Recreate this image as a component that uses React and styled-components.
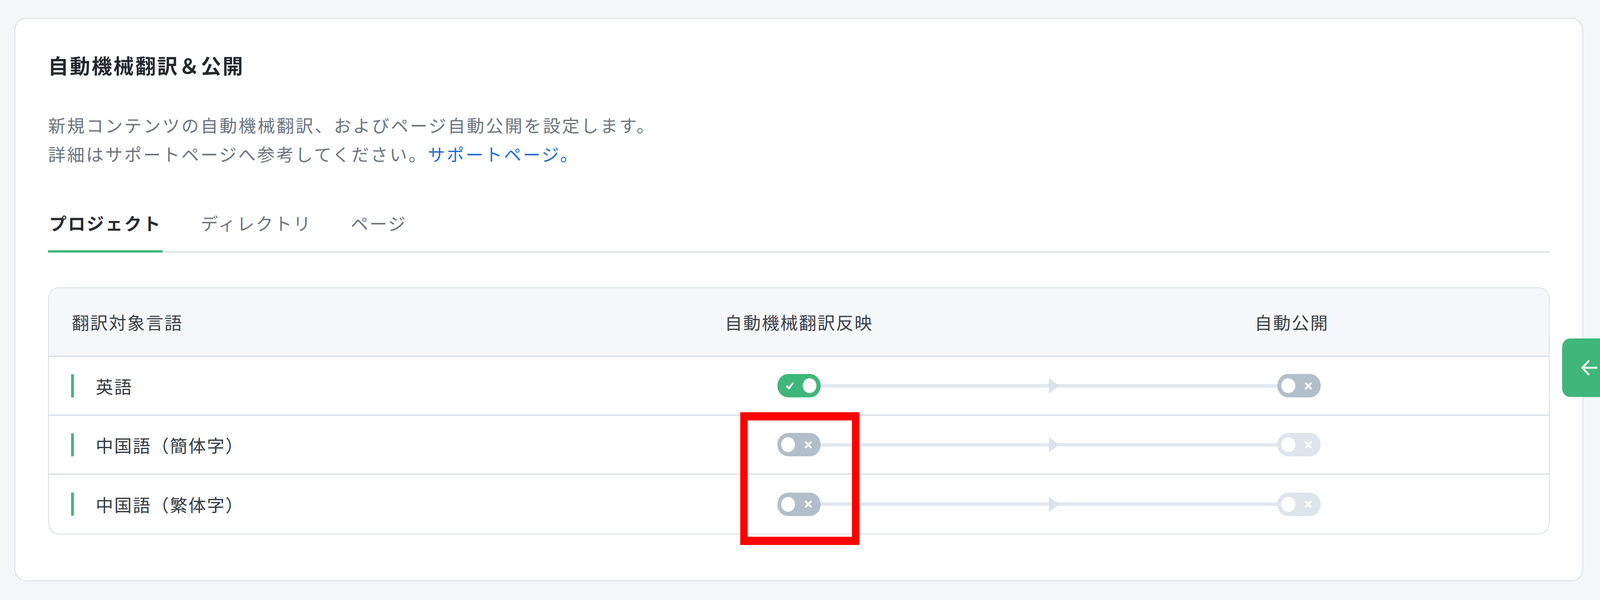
import React from "react";
import styled, { createGlobalStyle, css } from "styled-components";

// the design is measured on a 4400 x 1537 screen; scale it to the real viewport
const x = (n) => `calc(${n} * 100vw / 4400)`;
const y = (n) => `calc(${n} * 100vh / 1537)`;
const round = (n) => `${x(n)} / ${y(n)}`;

const GlobalStyle = createGlobalStyle`
  * { box-sizing: border-box; }
  html, body {
    margin: 0;
    overflow: hidden;
  }
  body {
    background: #f5f6f8;
    font-family: "Noto Sans CJK JP", "Noto Sans", sans-serif;
    color: #2b3138;
  }
`;

const languages = [
  { name: "英語", translate: true, publish: "off" },
  { name: "中国語（簡体字）", translate: false, publish: "disabled" },
  { name: "中国語（繁体字）", translate: false, publish: "disabled" },
];

export default function App() {
  return (
    <Page>
      <GlobalStyle />
      <Card>
        <Title>自動機械翻訳＆公開</Title>
        <Desc>
          新規コンテンツの自動機械翻訳、およびページ自動公開を設定します。
          <br />
          詳細はサポートページへ参考してください。
          <SupportLink href="#">サポートページ。</SupportLink>
        </Desc>

        <TabBar>
          <Tab $active>プロジェクト</Tab>
          <Tab>ディレクトリ</Tab>
          <Tab>ページ</Tab>
        </TabBar>

        <Table>
          <HeadRow>
            <HeadCell>翻訳対象言語</HeadCell>
            <HeadCell $center>自動機械翻訳反映</HeadCell>
            <HeadCell $center>自動公開</HeadCell>
          </HeadRow>
          {languages.map((lang) => (
            <Row key={lang.name}>
              <LangCell>
                <LangMark />
                {lang.name}
              </LangCell>
              <Flow>
                <Spacer />
                <Toggle state={lang.translate ? "on" : "off"} />
                <Connector />
                <Toggle state={lang.publish} />
                <Spacer />
              </Flow>
            </Row>
          ))}
        </Table>
      </Card>

      <SideTab>
        <ArrowIcon viewBox="0 0 44 40" fill="none" preserveAspectRatio="none">
          <path
            d="M20 3 L3 20 L20 37 M3 20 H42"
            stroke="#fff"
            strokeWidth="5"
            strokeLinecap="round"
            strokeLinejoin="round"
          />
        </ArrowIcon>
      </SideTab>

      <Highlight />
    </Page>
  );
}

function Toggle({ state }) {
  const on = state === "on";
  return (
    <Switch $state={state}>
      {on ? (
        <>
          <SwitchIcon viewBox="0 0 22 20" preserveAspectRatio="none">
            <path
              d="M3 11 L8 16 L19 4"
              stroke="#fff"
              strokeWidth="4.5"
              fill="none"
              strokeLinecap="round"
              strokeLinejoin="round"
            />
          </SwitchIcon>
          <Knob />
        </>
      ) : (
        <>
          <Knob />
          <SwitchIcon viewBox="0 0 22 22" preserveAspectRatio="none">
            <path
              d="M4 4 L18 18 M18 4 L4 18"
              stroke="#fff"
              strokeWidth="5"
              strokeLinecap="round"
            />
          </SwitchIcon>
        </>
      )}
    </Switch>
  );
}

const Page = styled.div`
  position: relative;
  height: 100vh;
  padding: ${y(46)} ${x(46)} 0 ${x(40)};
`;

const Card = styled.section`
  background: #fff;
  border: ${x(3)} solid #d6dde7;
  border-radius: ${round(32)};
  padding: ${y(79)} ${x(90)} ${y(118)} ${x(90)};
`;

const Title = styled.h2`
  margin: 0;
  font-size: ${x(56)};
  line-height: ${y(80)};
  font-weight: 700;
  letter-spacing: ${x(4)};
  color: #23282e;
`;

const Desc = styled.p`
  margin: ${y(76)} 0 0;
  font-size: ${x(48)};
  line-height: ${y(74)};
  letter-spacing: ${x(4.4)};
  color: #6c757f;
`;

const SupportLink = styled.a`
  color: #1f6fd6;
  text-decoration: none;
`;

const TabBar = styled.div`
  display: flex;
  gap: ${x(102)};
  margin-top: ${y(104)};
  border-bottom: ${y(3)} solid #d6dde7;
`;

const Tab = styled.div`
  font-size: ${x(48)};
  line-height: ${y(72)};
  letter-spacing: ${x(3.6)};
  padding: 0 ${x(2)} ${y(34)} ${x(3)};
  margin-bottom: ${y(-3)};
  border-bottom: ${y(6)} solid transparent;
  color: #6c757f;
  ${(p) =>
    p.$active &&
    css`
      font-weight: 700;
      color: #262b31;
      border-bottom-color: #3fb77a;
    `}
`;

const Table = styled.div`
  margin-top: ${y(89)};
  border: ${x(3)} solid #d6dde7;
  border-radius: ${round(30)};
  overflow: hidden;
`;

const grid = css`
  display: grid;
  grid-template-columns: repeat(3, 1fr);
  align-items: center;
  border-bottom: ${y(3)} solid #d6dde7;
  &:last-child {
    border-bottom: none;
  }
`;

const HeadRow = styled.div`
  ${grid};
  height: ${y(176)};
  background: #f6f7f9;
`;

const HeadCell = styled.div`
  font-size: ${x(48)};
  letter-spacing: ${x(3)};
  color: #3a4048;
  padding-left: ${(p) => (p.$center ? "0" : x(63))};
  text-align: ${(p) => (p.$center ? "center" : "left")};
  &:last-child {
    padding-right: ${x(40)};
  }
`;

const Row = styled.div`
  ${grid};
  height: ${y(151)};
`;

const LangCell = styled.div`
  display: flex;
  align-items: center;
  gap: ${x(60)};
  padding-left: ${x(61)};
  font-size: ${x(48)};
  letter-spacing: ${x(3)};
  color: #333a42;
`;

const LangMark = styled.span`
  width: ${x(8)};
  height: ${y(59)};
  background: #3fb77a;
`;

const Flow = styled.div`
  grid-column: 2 / 4;
  display: flex;
  align-items: center;
`;

const Spacer = styled.div`
  flex: 1 1 0;
`;

const Connector = styled.div`
  flex: 2 1 0;
  height: ${y(9)};
  background: #e3e8ef;
  position: relative;
  &::after {
    content: "";
    position: absolute;
    left: 50%;
    top: 50%;
    transform: translateY(-50%);
    border-top: ${y(20)} solid transparent;
    border-bottom: ${y(20)} solid transparent;
    border-left: ${x(29)} solid #dbe2ea;
  }
`;

const switchBg = {
  on: "#40b77a",
  off: "#b2bec9",
  disabled: "#dde4ec",
};

const Switch = styled.div`
  flex: none;
  width: ${x(119)};
  height: ${y(60)};
  border-radius: ${round(30)};
  background: ${(p) => switchBg[p.$state]};
  display: flex;
  align-items: center;
  justify-content: space-between;
  padding-left: ${(p) => (p.$state === "on" ? x(24) : x(11))};
  padding-right: ${(p) => (p.$state === "on" ? x(11) : x(23))};
`;

const SwitchIcon = styled.svg`
  width: ${x(22)};
  height: ${y(21)};
`;

const Knob = styled.span`
  width: ${x(38)};
  height: ${y(38)};
  border-radius: 50%;
  background: #fff;
`;

const SideTab = styled.div`
  position: absolute;
  top: ${y(867)};
  right: 0;
  width: ${x(104)};
  height: ${y(150)};
  background: #3fb77a;
  border-radius: ${x(22)} 0 0 ${x(22)} / ${y(22)} 0 0 ${y(22)};
  display: flex;
  align-items: center;
  padding-left: ${x(52)};
`;

const ArrowIcon = styled.svg`
  width: ${x(44)};
  height: ${y(40)};
`;

const Highlight = styled.div`
  position: absolute;
  left: ${x(2036)};
  top: ${y(1056)};
  width: ${x(327)};
  height: ${y(340)};
  border-style: solid;
  border-color: #ff0000;
  border-width: ${y(21)} ${x(21)};
  pointer-events: none;
`;
